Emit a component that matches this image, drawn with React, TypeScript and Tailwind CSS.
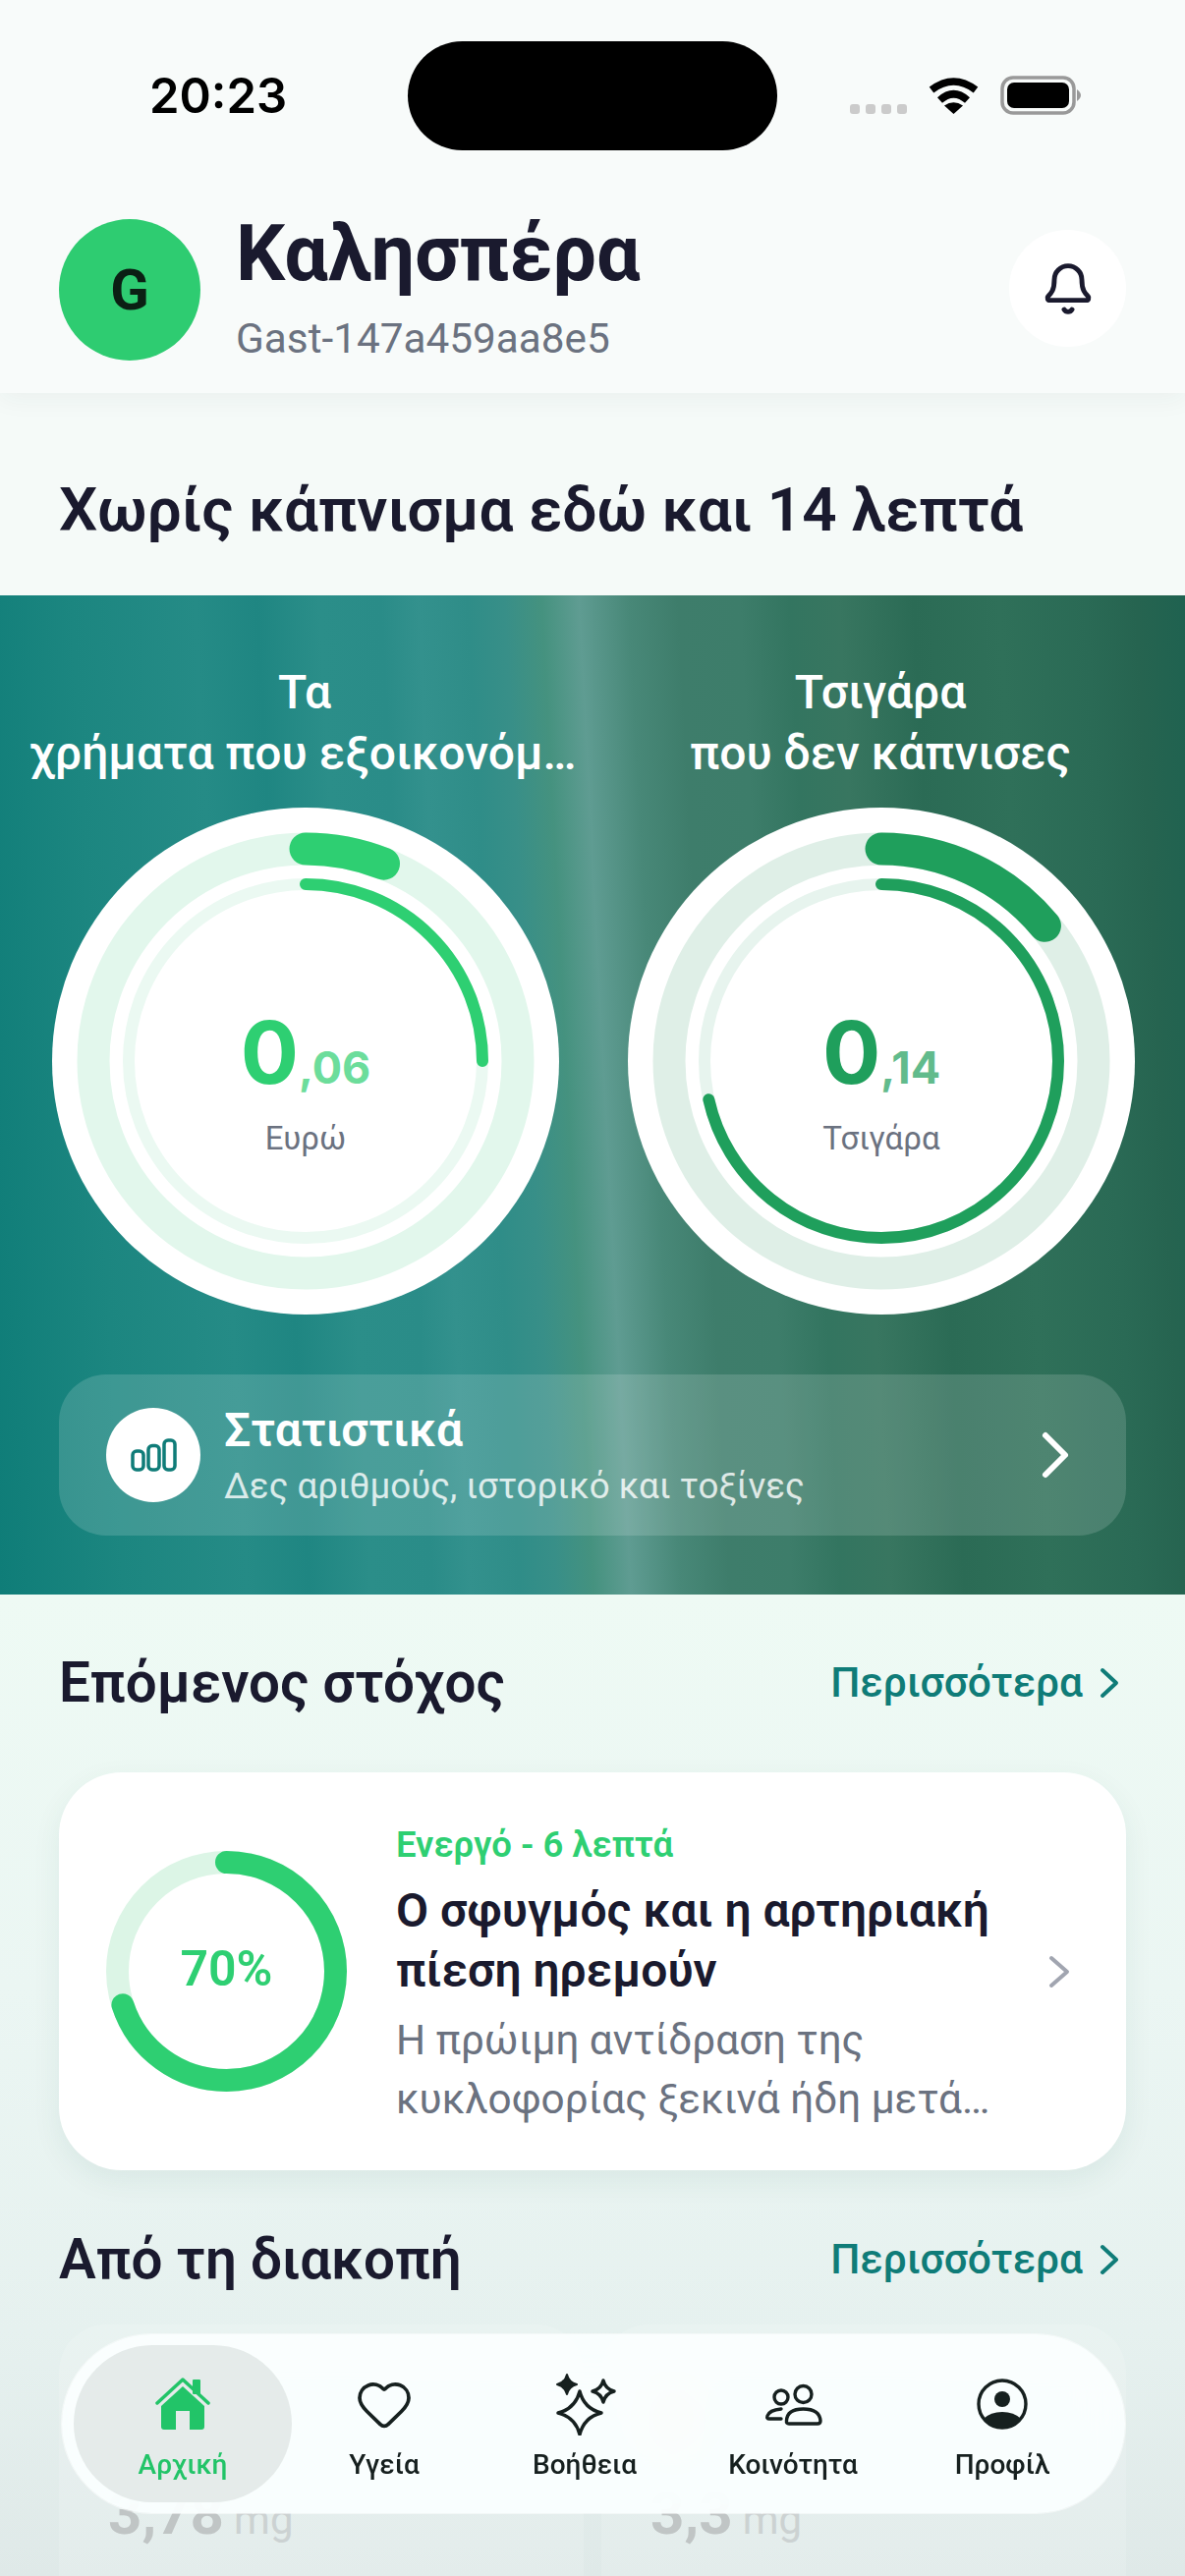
import { Bell, Heart } from 'lucide-react';

const FONT = 'font-[Roboto,"Noto_Sans",sans-serif]';

function WifiIcon() {
  return (
    <svg width="51" height="38" viewBox="0 0 51 38" fill="none">
      <path d="M3 13.5 Q25.5 -3.5 48 13.5" stroke="#000" strokeWidth="7.5" />
      <path d="M11.5 24 Q25.5 11.5 39.5 24" stroke="#000" strokeWidth="7.5" />
      <path d="M25.5 38 L16 29.5 Q25.5 23 35 29.5 Z" fill="#000" />
    </svg>
  );
}

function BatteryIcon() {
  return (
    <svg width="82" height="40" viewBox="0 0 82 40" fill="none">
      <rect x="2" y="2" width="73" height="36" rx="11" stroke="#999" strokeWidth="3.5" />
      <rect x="7" y="7" width="63" height="26" rx="7" fill="#000" />
      <path d="M78 14 Q82 17 82 20 Q82 23 78 26 Z" fill="#999" />
    </svg>
  );
}

function Chevron({ color, width, height, stroke }: { color: string; width: number; height: number; stroke: number }) {
  return (
    <svg width={width} height={height} viewBox={`0 0 ${width} ${height}`} fill="none" stroke={color} strokeWidth={stroke} strokeLinecap="round" strokeLinejoin="round">
      <path d={`M${stroke} ${stroke} L${width - stroke} ${height / 2} L${stroke} ${height - stroke}`} />
    </svg>
  );
}

function StatusBar() {
  return (
    <div className="flex items-center pl-[152px] pt-[42px]">
      <span className="w-[263px] text-[49px] leading-none font-semibold text-black font-[Inter,sans-serif]">20:23</span>
      <div className="h-[111px] w-[376px] rounded-full bg-black" />
      <div className="ml-[74px] mt-[26px] flex gap-[6px]">
        <span className="h-[10px] w-[10px] rounded-[3px] bg-[#cbcbcb]" />
        <span className="h-[10px] w-[10px] rounded-[3px] bg-[#cbcbcb]" />
        <span className="h-[10px] w-[10px] rounded-[3px] bg-[#cbcbcb]" />
        <span className="h-[10px] w-[10px] rounded-[3px] bg-[#cbcbcb]" />
      </div>
      <div className="ml-[22px] -mt-[1px]">
        <WifiIcon />
      </div>
      <div className="ml-[22px] -mt-[1px]">
        <BatteryIcon />
      </div>
    </div>
  );
}

function Header() {
  return (
    <div className="relative z-10 bg-[#f8fbfa] shadow-[0_6px_24px_rgba(30,60,50,0.05)]">
      <StatusBar />
      <div className="flex h-[247px] items-start justify-between px-[60px] pt-[67px]">
        <div className="flex items-center gap-[36px]">
          <div className="flex h-[144px] w-[144px] items-center justify-center rounded-full bg-[#2ecc71] text-[58px] font-bold text-[#0b1f14]">
            G
          </div>
          <div className="flex flex-col">
            <span className="-mt-[8px] text-[79px] leading-[92px] font-bold text-[#1a1a2e]">Καλησπέρα</span>
            <span className="mt-[16px] text-[42.3px] leading-[50px] text-[#6b7280]">Gast-147a459aa8e5</span>
          </div>
        </div>
        <div className="mt-[14px] flex h-[119px] w-[119px] items-center justify-center rounded-full bg-white">
          <Bell size={56} strokeWidth={2.1} className="text-[#1a1a2e]" />
        </div>
      </div>
    </div>
  );
}

interface RingProps {
  value: string;
  decimals: string;
  label: string;
  color: string;
  band: string;
  track: string;
  outer: number;
  inner: number;
}

function Ring({ value, decimals, label, color, band, track, outer, inner }: RingProps) {
  return (
    <div className="relative mx-auto h-[516px] w-[516px] translate-x-[1px]">
      <svg width="516" height="516" viewBox="0 0 516 516" fill="none">
        <circle cx="258" cy="258" r="258" fill="#fff" />
        <circle cx="258" cy="258" r="216" stroke={band} strokeWidth="33" />
        <circle cx="258" cy="258" r="180" stroke={track} strokeWidth="12" />
        <circle
          cx="258"
          cy="258"
          r="216"
          stroke={color}
          strokeWidth="33"
          strokeLinecap="round"
          pathLength={100}
          strokeDasharray={`${outer} 100`}
          transform="rotate(-90 258 258)"
        />
        <circle
          cx="258"
          cy="258"
          r="180"
          stroke={color}
          strokeWidth="12"
          strokeLinecap="round"
          pathLength={100}
          strokeDasharray={`${inner} 100`}
          transform="rotate(-90 258 258)"
        />
      </svg>
      <div className="absolute inset-0 flex flex-col items-center justify-center pt-[42px]">
        <div className="flex items-baseline font-bold leading-none font-[Inter,sans-serif]" style={{ color }}>
          <span className="text-[88px] leading-[100px]">{value}</span>
          <span className="text-[45px] opacity-70">{decimals}</span>
        </div>
        <span className="mt-[16px] text-[33px] leading-[44px] text-[#6b7280]">{label}</span>
      </div>
    </div>
  );
}

function Hero() {
  return (
    <div className="h-[1017px] bg-[linear-gradient(87deg,#0f7d78_0%,#1c8680_10%,#258b86_20%,#1f8682_25%,#2b8e89_30%,#2a8c88_35%,#33918d_38%,#2f8d88_42%,#388f88_45%,#45927f_48%,#5f9c92_51%,#488878_55%,#3e7d6b_59%,#3d7d6a_64%,#337560_68%,#387660_72%,#2b6b55_78%,#2f7059_85%,#2a6a55_92%,#266450_96%,#1f6250_100%)] pt-[68px]">
      <div className="grid grid-cols-2 gap-[6px] px-[20px]">
        <div className="min-w-0 text-center text-[48px] leading-[62px] font-medium text-white">
          <p>Τα</p>
          <p className="truncate pl-[10px]">χρήματα που εξοικονόμησες</p>
        </div>
        <div className="min-w-0 text-center text-[48px] leading-[62px] font-medium text-white">
          <p>Τσιγάρα</p>
          <p className="truncate">που δεν κάπνισες</p>
        </div>
      </div>
      <div className="mt-[24px] grid grid-cols-2 gap-[6px] px-[20px]">
        <Ring value="0" decimals=",06" label="Ευρώ" color="#2ecf72" band="#e2f7ec" track="#ebf9f2" outer={6} inner={25} />
        <Ring value="0" decimals=",14" label="Τσιγάρα" color="#1f9f5c" band="#dfefe7" track="#e7f4ee" outer={14} inner={71.5} />
      </div>
      <div className="mx-[60px] mt-[61px] flex h-[164px] items-center rounded-[48px] bg-white/15 pl-[48px] pr-[56px]">
        <div className="flex h-[96px] w-[96px] shrink-0 items-center justify-center rounded-full bg-white">
          <svg width="47" height="34" viewBox="0 0 47 34" fill="none" stroke="#0f7c78" strokeWidth="3.5">
            <rect x="2" y="13" width="11" height="19" rx="4" />
            <rect x="18" y="7.5" width="11" height="24.5" rx="4" />
            <rect x="34" y="2" width="11" height="30" rx="4" />
          </svg>
        </div>
        <div className="ml-[24px] flex-1">
          <p className="text-[48px] leading-[56px] font-semibold text-white">Στατιστικά</p>
          <p className="mt-[7px] text-[36.7px] leading-[44px] text-white/80">Δες αριθμούς, ιστορικό και τοξίνες</p>
        </div>
        <Chevron color="#fff" width={32} height={52} stroke={6} />
      </div>
    </div>
  );
}

function SectionHead({ title }: { title: string }) {
  return (
    <div className="flex h-[80px] items-center justify-between">
      <h2 className="text-[56.5px] font-semibold text-[#1a1a2e]">{title}</h2>
      <div className="flex items-center gap-[16px] pr-[6px] text-[#0f7c78]">
        <span className="text-[42.5px] font-medium">Περισσότερα</span>
        <Chevron color="#0f7c78" width={22} height={34} stroke={4} />
      </div>
    </div>
  );
}

function GoalCard() {
  return (
    <div className="mt-[51px] flex h-[405px] items-center rounded-[64px] bg-white pl-[48px] pr-[56px] shadow-[0_10px_30px_rgba(20,80,70,0.07)]">
      <div className="relative h-[245px] w-[245px] shrink-0">
        <svg width="245" height="245" viewBox="0 0 245 245" fill="none">
          <circle cx="122.5" cy="122.5" r="111" stroke="#dcf5e6" strokeWidth="23" />
          <circle
            cx="122.5"
            cy="122.5"
            r="111"
            stroke="#2ecf72"
            strokeWidth="23"
            strokeLinecap="round"
            pathLength={100}
            strokeDasharray="70 100"
            transform="rotate(-90 122.5 122.5)"
          />
        </svg>
        <div className="absolute inset-0 flex items-center justify-center pb-[4px] text-[50px] font-semibold text-[#2ecf72]">70%</div>
      </div>
      <div className="ml-[50px] mt-[6px] w-[625px]">
        <p className="text-[36.5px] leading-[50px] font-semibold text-[#2ecf72]">Ενεργό - 6 λεπτά</p>
        <p className="mt-[11px] text-[48px] leading-[61px] font-semibold text-[#1a1a2e]">Ο σφυγμός και η αρτηριακή πίεση ηρεμούν</p>
        <p className="mt-[11px] line-clamp-2 text-[42.3px] leading-[60px] text-[#6b7280]">
          Η πρώιμη αντίδραση της κυκλοφορίας ξεκινά ήδη μετά από λίγα λεπτά χωρίς τσιγάρο.
        </p>
      </div>
      <div className="ml-auto shrink-0">
        <Chevron color="#a1a5b0" width={24} height={36} stroke={4} />
      </div>
    </div>
  );
}

function ToxinCard({ dot, name, amount }: { dot: string; name: string; amount: string }) {
  return (
    <div className="h-[320px] rounded-[48px] bg-white/15 px-[50px] pt-[54px]">
      <div className="flex items-center gap-[20px]">
        <span className="h-[80px] w-[44px] shrink-0 rounded-full opacity-50" style={{ backgroundColor: dot }} />
        <span className="truncate text-[42px] font-semibold text-[#c7d0d2]">{name}</span>
      </div>
      <p className="mt-[24px] flex items-baseline gap-[10px] text-[#c0c5c5]">
        <span className="text-[60px] leading-[70px] font-bold">{amount}</span>
        <span className="text-[42px] text-[#ccd2d2]">mg</span>
      </p>
    </div>
  );
}

function HomeIcon() {
  return (
    <svg width="56" height="54" viewBox="0 0 56 54" fill="none">
      <path d="M2 26 L28 2 L54 26" stroke="#22c468" strokeWidth="3.5" strokeLinecap="round" strokeLinejoin="round" />
      <rect x="38" y="2" width="8" height="15" rx="1" fill="#22c468" />
      <path d="M28 9 L50 29 V50 Q50 53 47 53 H35 V34 H21 V53 H9 Q6 53 6 50 V29 Z" fill="#22c468" />
    </svg>
  );
}

function star(cx: number, cy: number, r: number) {
  const k = r * 0.2;
  return `M${cx} ${cy - r} Q${cx + k} ${cy - k} ${cx + r} ${cy} Q${cx + k} ${cy + k} ${cx} ${cy + r} Q${cx - k} ${cy + k} ${cx - r} ${cy} Q${cx - k} ${cy - k} ${cx} ${cy - r} Z`;
}

function SparklesIcon() {
  return (
    <svg width="64" height="64" viewBox="0 0 64 64" fill="none" stroke="#16201f" strokeWidth="3.4" strokeLinejoin="round">
      <path d={star(27, 41, 22)} />
      <path d={star(14, 12, 10)} fill="#16201f" strokeWidth="2" />
      <path d={star(51, 19, 11)} />
    </svg>
  );
}

function PeopleIcon() {
  return (
    <svg width="64" height="64" viewBox="0 0 64 64" fill="none" stroke="#16201f" strokeWidth="3.4" strokeLinecap="round" strokeLinejoin="round">
      <circle cx="20" cy="25" r="7" />
      <circle cx="42.5" cy="22" r="8.5" />
      <path d="M25.5 49 Q26 37 42.5 37 Q59 37 60 49 Q60 52 57 52 H28 Q25 52 25.5 49 Z" />
      <path d="M20 47 H8 Q5 47 6 44 Q8 38 20 37" />
    </svg>
  );
}

function ProfileIcon() {
  return (
    <svg width="52" height="52" viewBox="0 0 52 52" fill="none">
      <circle cx="26" cy="26" r="24" stroke="#16201f" strokeWidth="3.4" />
      <circle cx="26" cy="21" r="8" fill="#16201f" />
      <path d="M7 41 Q14 34 26 34 Q38 34 45 41 A24 24 0 0 1 7 41 Z" fill="#16201f" />
    </svg>
  );
}

function NavItem({ label, icon, width, active }: { label: string; icon: React.ReactNode; width: string; active?: boolean }) {
  return (
    <div className={`flex h-[160px] shrink-0 flex-col items-center rounded-[80px] pt-[28px] ${width} ${active ? 'bg-[#e5ebea]' : ''}`}>
      <div className="flex h-[64px] items-center justify-center">{icon}</div>
      <span className={`mt-[12px] text-[28px] leading-[36px] font-medium ${active ? 'text-[#22c468]' : 'text-[#16201f]'}`}>{label}</span>
    </div>
  );
}

function BottomNav() {
  return (
    <div className="absolute bottom-[64px] left-[63px] flex h-[182px] w-[1082px] items-center rounded-[91px] bg-[#fbffff]/92 pl-[12px] shadow-[0_0_0_1px_rgba(255,255,255,0.5)] backdrop-blur-xl">
      <NavItem label="Αρχική" icon={<HomeIcon />} width="w-[222px]" active />
      <NavItem label="Υγεία" icon={<Heart size={60} strokeWidth={1.5} className="text-[#16201f]" />} width="w-[188px]" />
      <NavItem label="Βοήθεια" icon={<SparklesIcon />} width="w-[220px]" />
      <NavItem label="Κοινότητα" icon={<PeopleIcon />} width="w-[204px]" />
      <NavItem label="Προφίλ" icon={<ProfileIcon />} width="w-[222px]" />
    </div>
  );
}

export default function App() {
  return (
    <div className={`relative h-[2622px] w-[1206px] overflow-hidden bg-[#f5faf8] ${FONT}`}>
      <Header />
      <div className="flex h-[206px] items-center px-[60px] pt-[30px]">
        <h1 className="text-[62px] font-semibold text-[#1a1a2e]">Χωρίς κάπνισμα εδώ και 14 λεπτά</h1>
      </div>
      <Hero />
      <div className="h-[999px] bg-[linear-gradient(180deg,#eefaf4_0%,#ebf6f3_40%,#e6f1ef_75%,#dfe9e8_100%)] px-[60px] pt-[50px]">
        <SectionHead title="Επόμενος στόχος" />
        <GoalCard />
        <div className="mt-[51px]">
          <SectionHead title="Από τη διακοπή" />
        </div>
        <div className="mt-[26px] grid grid-cols-2 gap-[18px]">
          <ToxinCard dot="#f7a8a0" name="Μονοξείδιο του άνθρακα" amount="3,78" />
          <ToxinCard dot="#fbc39a" name="Μονοξείδιο του αζώτου" amount="3,3" />
        </div>
      </div>
      <BottomNav />
    </div>
  );
}
